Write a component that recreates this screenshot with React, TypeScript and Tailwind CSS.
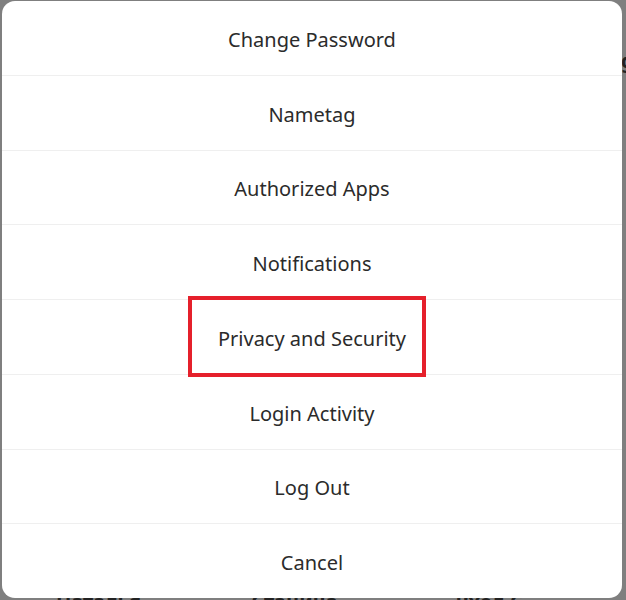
import React from 'react';

const items = [
  'Change Password',
  'Nametag',
  'Authorized Apps',
  'Notifications',
  'Privacy and Security',
  'Login Activity',
  'Log Out',
  'Cancel',
];

export default function App() {
  return (
    <div
      className="relative w-[626px] h-[600px] overflow-hidden bg-[#7f7f7f]"
      style={{ fontFamily: '"Noto Sans", "Open Sans", sans-serif' }}
    >
      {/* page behind the sheet */}
      <div className="absolute left-0 right-0 top-[592px] flex text-[20px] font-bold leading-none text-[#222]">
        <span className="ml-[56px]">Наталья</span>
        <span className="ml-[110px]">Станица</span>
        <span className="ml-[118px]">Вход С</span>
      </div>
      <div className="absolute left-[621px] top-[46px] text-[20px] font-bold text-[#222]">g</div>

      {/* options sheet */}
      <div className="absolute left-[2px] top-[1px] w-[620px] h-[597px] rounded-[13px] bg-white flex flex-col">
        {items.map((label, i) => (
          <div
            key={label}
            className={`flex-1 flex items-center justify-center text-[20px] text-[#2b2b2b] ${i > 0 ? 'border-t border-[#efefef]' : ''}`}
          >
            <span className="mt-[4px]">{label}</span>
          </div>
        ))}
      </div>

      {/* highlight annotation */}
      <div className="absolute left-[188px] top-[296px] w-[238px] h-[81px] border-[4px] border-[#e5202b]" />
    </div>
  );
}
